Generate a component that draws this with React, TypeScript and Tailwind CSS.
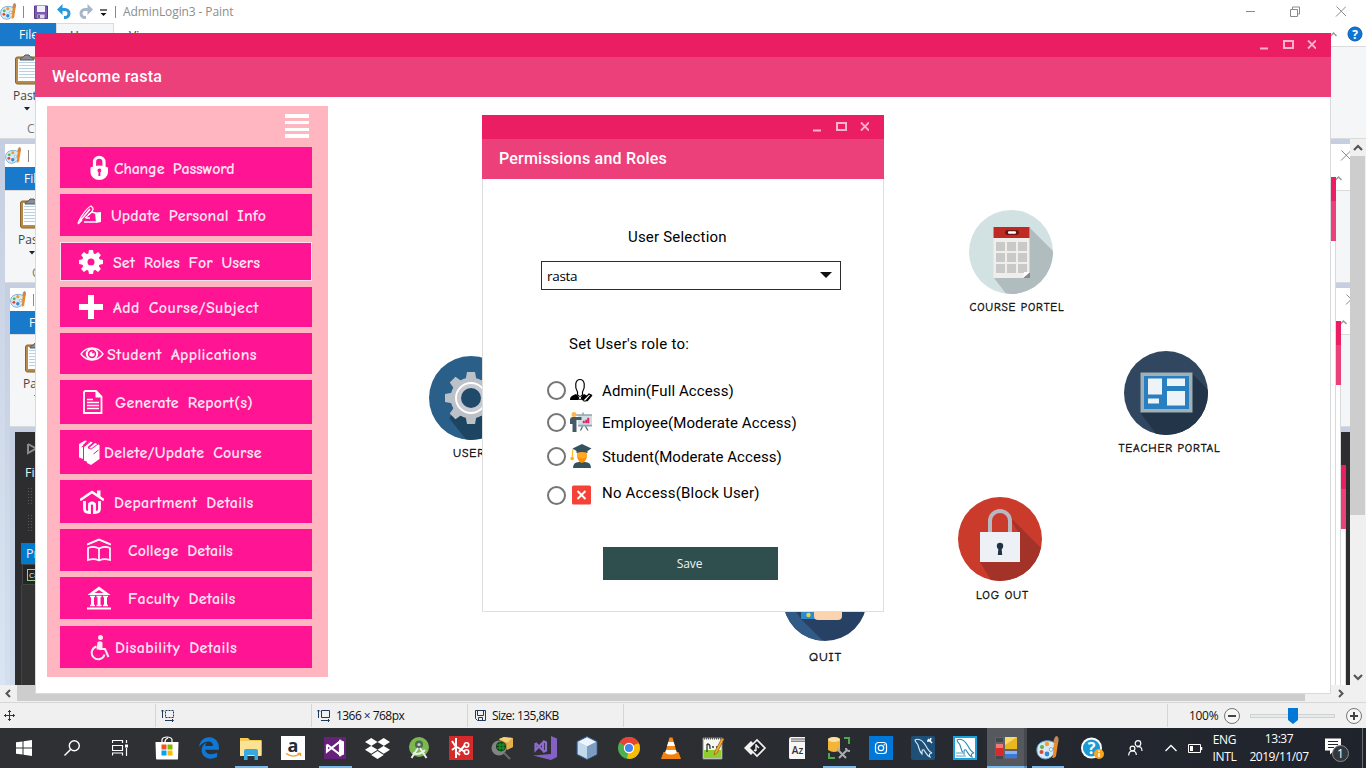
import React from "react";
import { FaDropbox, FaEdgeLegacy } from "react-icons/fa";

const ui = "font-['Open_Sans','Noto_Sans',sans-serif]";
const comic = "font-['Comic_Sans_MS','Comic_Neue','Noto_Sans',sans-serif]";

type SvgProps = { w: number; h: number; vb?: string; className?: string; children: React.ReactNode };
function Svg({ w, h, vb, className, children }: SvgProps) {
  return (
    <svg width={w} height={h} viewBox={vb ?? `0 0 ${w} ${h}`} className={`block shrink-0 ${className ?? ""}`} fill="none">
      {children}
    </svg>
  );
}

function Palette({ size }: { size: number }) {
  return (
    <Svg w={size} h={size} vb="0 0 24 24">
      <path d="M1 12c1-6 8-8 13-7 5 1 6 3 5 5s-2 2-1 4-1 8-8 9C4 23 0 19 1 12Z" fill="#d5e9f6" stroke="#5b9ac4" strokeWidth="1" />
      <circle cx="11" cy="8" r="2.200" fill="#f0a030" />
      <circle cx="6" cy="11" r="2" fill="#5fb445" />
      <circle cx="5.500" cy="16" r="2" fill="#e0452f" />
      <circle cx="11" cy="18" r="2.400" fill="#3a86c8" />
      <circle cx="15" cy="13.500" r="1.800" fill="#fff" stroke="#5b9ac4" strokeWidth="0.800" />
      <path d="M20 0c3 0 3 5 2 7h-4c-1-2 0-5 2-7Z" fill="#c48a55" />
      <path d="M18 7h4l-2 13c-1 2-3 2-4 2 2-3 1-9 2-15Z" fill="#ee8a25" />
    </Svg>
  );
}

function Clipboard() {
  return (
    <Svg w={24} h={32}>
      <rect x="1.500" y="3" width="26" height="27" rx="2" fill="#b98a45" stroke="#8a6430" />
      <rect x="4" y="5" width="20" height="22" fill="#fbfdff" />
      {[8, 11, 14, 17, 20, 23].map((y) => (
        <path key={y} d={`M5 ${y}.5h19`} stroke="#b9d0e0" />
      ))}
      <path d="M6 6c0-3 4-2 5-5h4c1 3 5 2 5 5Z" fill="#8a8d92" stroke="#55585d" />
    </Svg>
  );
}

function Gear({ size, color, hole, r = 8 }: { size: number; color: string; hole: string; r?: number }) {
  return (
    <Svg w={size} h={size} vb="-12 -12 24 24">
      {[0, 45, 90, 135, 180, 225, 270, 315].map((a) => (
        <path key={a} d="M-2.900 -7L-2 -12H2L2.900 -7Z" fill={color} transform={`rotate(${a})`} />
      ))}
      <circle r="9" fill={color} />
      <circle r={12 - r} fill={hole} />
    </Svg>
  );
}

function CaptionButtons() {
  return (
    <Svg w={58} h={12} className="mr-[15px]">
      <g stroke="#f9b4cb" strokeWidth="2">
        <path d="M2 9.500h8" />
        <rect x="26" y="2" width="9" height="7" />
        <path d="M50 1.500l8 8M58 1.500l-8 8" strokeWidth="1.800" />
      </g>
    </Svg>
  );
}

function TitleBars({ title, tracking }: { title: string; tracking: string }) {
  return (
    <>
      <div className="flex h-6 shrink-0 items-center justify-end bg-[#eb1d63]"><CaptionButtons /></div>
      <div className={`flex h-10 shrink-0 items-center bg-[#ec407a] pb-px pl-[17px] font-['Roboto',sans-serif] text-[16px] font-medium text-white ${tracking}`}>
        {title}
      </div>
    </>
  );
}

const items: { label: string; box: string; pad: string; text: string; icon: React.ReactNode }[] = [
  { label: "Change Password", box: "h-[41px]", pad: "pl-[30px]", text: "ml-1 tracking-[-0.2px]", icon: (
    <Svg w={20} h={26}><path d="M4.500 13V7a4.700 4.700 0 0 1 9.500 0v6" stroke="#fff" strokeWidth="3.200" /><path d="M.5 12.500q9-4 17.500 0v5a8.700 7.500 0 0 1-17.500 0Z" fill="#fff" /><path d="M9.300 13.500a2 2 0 0 1 1.100 3.700v3.800h-2v-3.800a2 2 0 0 1 .9-3.700Z" fill="#ff1493" /></Svg>) },
  { label: "Update Personal Info", box: "mt-[6px] h-[42px]", pad: "pl-[17px]", text: "ml-[9px] tracking-[0.12px]", icon: (
    <Svg w={25} h={20}><path d="M1 18l3-6C8 6 11 2 14 1l2 2c1 3-4 7-8 10" stroke="#fff" strokeWidth="1.300" /><path d="M3 16L13 4M1 19l4-4" stroke="#fff" strokeWidth="1.500" /><path d="M11 10l4-3 3 1h1M9 13h4M7 17h12" stroke="#fff" strokeWidth="1.400" /><path d="M18 7.500l6-.5v10l-5 1Z" fill="#fff" /></Svg>) },
  { label: "Set Roles For Users", box: "mt-[6px] h-[39px] border border-[#f3e6ee]", pad: "pl-[18px]", text: "ml-[10px] tracking-[0.03px]", icon: <Gear size={24} color="#fff" hole="#ff1493" r={8.5} /> },
  { label: "Add Course/Subject", box: "mt-[6px] h-[40px]", pad: "pl-[19px]", text: "ml-[10px] tracking-[0.4px]", icon: (
    <Svg w={24} h={24}><path d="M9 0h6v9h9v6h-9v9H9v-9H0V9h9Z" fill="#fff" /></Svg>) },
  { label: "Student Applications", box: "mt-[6px] h-[41px]", pad: "pl-[20px]", text: "ml-[3px] tracking-[0.35px]", icon: (
    <Svg w={24} h={18}><path d="M1 9C7 .8 17 .8 23 9 17 17 7 17 1 9Z" stroke="#fff" strokeWidth="1.300" /><circle cx="12" cy="9" r="5.200" stroke="#fff" strokeWidth="2" /><circle cx="12" cy="9" r="2.600" fill="#fff" /><circle cx="13" cy="7.500" r="1" fill="#ff1493" /></Svg>) },
  { label: "Generate Report(s)", box: "mt-[6px] h-[44px]", pad: "pl-[23px]", text: "ml-[12px] tracking-[0.17px]", icon: (
    <Svg w={20} h={24}><path d="M2 1h11l5.500 5.500V23H1V2Z" stroke="#fff" strokeWidth="1.800" /><path d="M12.500 1v6.500H19L12.500 1Z" fill="#fff" /><path d="M4 9.500h6M4 12.500h12M4 15.500h12M4 18.500h12" stroke="#fff" strokeWidth="1.400" /></Svg>) },
  { label: "Delete/Update Course", box: "mt-[6px] h-[44px]", pad: "pl-[19px]", text: "ml-[4px] tracking-[0.22px]", icon: (
    <Svg w={21} h={25}><path d="M0 4L6 .500l2 .5-4 4v14L0 17.500Z" fill="#fff" /><path d="M4.800 6.500l6-5 3 1-5 4.500v15l-4-1.500Z" fill="#fff" /><path d="M9.500 8.500L16 3l4.500 2v14L12 25l-4-2V8Z" fill="#fff" /><path d="M9 7.500l3 1.700L19 4M4.500 7l7-5.500M4.500 7v13M14.500 14l5-4M9 3L2.500 7" stroke="#ff1493" strokeWidth="1" /></Svg>) },
  { label: "Department Details", box: "mt-[6px] h-[43px]", pad: "pl-[20px]", text: "ml-[10px] tracking-[0.28px]", icon: (
    <Svg w={24} h={24}><path d="M1 9.500L12 2l11 7.500" stroke="#fff" strokeWidth="2.600" strokeLinecap="round" /><path d="M17 .5h3.500v7L17 5Z" fill="#fff" /><path d="M4.500 11v8q0 3.500 5 3.500V14q2.500-2 5 0v8.500q5 0 5-3.500v-8" stroke="#fff" strokeWidth="2.800" /></Svg>) },
  { label: "College Details", box: "mt-[6px] h-[42px]", pad: "pl-[27px]", text: "ml-[17px] tracking-[0.07px]", icon: (
    <Svg w={24} h={24}><path d="M0 6.500L12 1.500l12 5" stroke="#fff" strokeWidth="2" /><path d="M1 10q6-2.500 11 .5 5-3 11-.5v12q-6-2-11 .5-5-2.500-11-.5ZM12 10.500v12" stroke="#fff" strokeWidth="1.700" /></Svg>) },
  { label: "Faculty Details", box: "mt-[6px] h-[42px]", pad: "pl-[27px]", text: "ml-[17px] tracking-[0.27px]", icon: (
    <Svg w={24} h={24}><path d="M12 .5l11.500 8.500H.5ZM12 4L7.500 7h9Z" fill="#fff" fillRule="evenodd" /><path d="M3 10.500h5M9.500 10.500h5M16 10.500h5M3 19.500h5M9.500 19.500h5M16 19.500h5" stroke="#fff" strokeWidth="1.500" /><path d="M5.500 10v10M12 10v10M18.500 10v10" stroke="#fff" strokeWidth="3" /><path d="M0 21.500h24v2H0Z" fill="#fff" /></Svg>) },
  { label: "Disability Details", box: "mt-[7px] h-[42px]", pad: "pl-[29px]", text: "ml-[5px] tracking-[0.38px]", icon: (
    <Svg w={21} h={27}><circle cx="11.500" cy="3.500" r="2.500" fill="#f4ecf0" /><path d="M8.500 8q3-1.500 5 .5v7h-6Z" fill="#f4ecf0" /><path d="M10 15h6l3.500 8M7.500 12.500a6.500 6.500 0 1 0 8 8" stroke="#f4ecf0" strokeWidth="2" /></Svg>) },
];

function Sidebar() {
  return (
    <nav className="mt-[9px] ml-[11px] flex h-[571px] w-[281px] shrink-0 flex-col bg-[#ffb6c1] px-[13px]">
      <div className="mt-2 mr-[6px] ml-auto flex h-6 w-6 flex-col justify-between">
        <i className="h-[3.5px] bg-white" /><i className="h-[3.5px] bg-white" /><i className="h-[3.5px] bg-white" /><i className="h-[3.5px] bg-white" />
      </div>
      <div className="mt-[9px] flex w-[252px] flex-col">
        {items.map((it) => (
          <button key={it.label} className={`flex shrink-0 items-center bg-[#ff1493] text-left text-[16px] font-bold whitespace-nowrap text-[#fbe4f0] ${comic} ${it.box} ${it.pad}`}>
            {it.icon}
            <span className={`pt-[2px] leading-5 [word-spacing:3px] ${it.text}`}>{it.label}</span>
          </button>
        ))}
      </div>
    </nav>
  );
}

type TileProps = { pos: string; label: string; x: number; y: number; len: number; bg: string; id: string; children: React.ReactNode };
function Tile({ pos, label, x, y, len, bg, id, children }: TileProps) {
  return (
    <div className={`absolute h-[110px] w-[120px] ${pos}`}>
      <Svg w={120} h={110}>
        <defs><clipPath id={id}><circle cx="60" cy="44" r="42" /></clipPath></defs>
        <circle cx="60" cy="44" r="42" fill={bg} />
        <g clipPath={`url(#${id})`}>{children}</g>
        <text x={x} y={y} textLength={len} lengthAdjust="spacingAndGlyphs" fontSize="11" letterSpacing="0.8" fill="#111" stroke="#111" strokeWidth="0.350" fontFamily="'Comic Sans MS','Comic Neue','Noto Sans',sans-serif">{label}</text>
      </Svg>
    </div>
  );
}

function Tiles() {
  return (
    <>
      <Tile pos="top-[320.5px] left-[376px]" label="USER" x={42} y={102.5} len={32} bg="#2a5f8a" id="t-user">
        <path d="M38 64L82 22l60 60-50 50Z" fill="#1d4562" />
        {[0, 45, 90, 135, 180, 225, 270, 315].map((a) => (
          <path key={a} d="M-5.500 -18L-4 -26H4L5.500 -18Z" fill="#bcc0c7" transform={`translate(60 44) rotate(${a})`} />
        ))}
        <circle cx="60" cy="44" r="20.500" fill="#bcc0c7" />
        <circle cx="60" cy="44" r="15" fill="#c7cad0" stroke="#fff" strokeWidth="2" />
        <circle cx="60" cy="44" r="10" fill="#1f4a69" />
      </Tile>
      <Tile pos="top-[175px] left-[915.5px]" label="COURSE PORTEL" x={18.5} y={102.5} len={95} bg="#d2e2e3" id="t-course">
        <path d="M78 19l60 60-50 50-45-59Z" fill="#b0bcbd" />
        <rect x="42.500" y="20" width="36" height="50" fill="#f0eeea" />
        <rect x="42.500" y="19" width="36" height="11" fill="#c02a22" />
        <rect x="54" y="22" width="14" height="5" rx="2.500" fill="#6d1714" /><rect x="57" y="23.200" width="8" height="2.600" rx="1" fill="#fff" />
        {[34, 45, 56].map((cy) => [45, 56, 67].map((cx) => <rect key={`${cx}-${cy}`} x={cx} y={cy} width="9" height="9" fill="#c8c9c8" />))}
        <path d="M72 70l7-6v6Z" fill="#85888b" /><path d="M72 70l1-6h6Z" fill="#fff" />
      </Tile>
      <Tile pos="top-[315.5px] left-[1071px]" label="TEACHER PORTAL" x={12.5} y={102.5} len={102} bg="#31475f" id="t-teacher">
        <path d="M85 23.500l60 60-60 50-50-69Z" fill="#233548" />
        <rect x="34.500" y="23.500" width="52" height="40" fill="#9fb0b6" />
        <rect x="38" y="27" width="45" height="33" fill="#2a7fc0" />
        <g fill="#eef3f8"><rect x="42" y="29.500" width="14" height="16" /><rect x="61" y="29.500" width="18" height="7.500" /><rect x="42" y="49.500" width="11" height="5" /><rect x="61" y="42" width="18" height="14.500" /></g>
      </Tile>
      <Tile pos="top-[462px] left-[905px]" label="LOG OUT" x={36} y={104} len={53} bg="#cb3b2c" id="t-logout">
        <path d="M68 20l60 60-50 50-38-63L80 40Z" fill="#a33228" />
        <path d="M50 38V26a10 10 0 0 1 20 0v12" stroke="#b7b8c1" strokeWidth="4" />
        <rect x="40" y="37" width="40" height="30" fill="#edf1f6" />
        <circle cx="60" cy="51" r="3.200" fill="#1f3345" /><path d="M58.500 52h3l.7 8h-4.400Z" fill="#1f3345" />
      </Tile>
      <Tile pos="top-[521.5px] left-[730px]" label="QUIT" x={44} y={105.5} len={33} bg="#264163" id="t-quit">
        <path d="M0 0h120v40H0ZM36 64l24 24-40 10V40Z" fill="#315a87" />
        <rect x="36" y="50" width="14" height="14" fill="#2a8bd0" /><circle cx="43.500" cy="60" r="2.200" fill="#f5cf3a" />
        <rect x="49" y="46" width="28" height="19" rx="4" fill="#fbd3ae" />
      </Tile>
    </>
  );
}

function Radio() {
  return <span className="block h-[19px] w-[19px] shrink-0 rounded-full border-2 border-[#757575] bg-white" />;
}

const roles: { label: string; row: string; text: string; icon: React.ReactNode }[] = [
  { label: "Admin(Full Access)", row: "h-8", text: "tracking-[0.1px]", icon: (
    <Svg w={24} h={24}><path d="M7.500 14C4.500 9 5 1.500 10 1.500S15.500 9 12.500 14v3L10 19l-2.500-2Z" stroke="#000" strokeWidth="1.200" /><path d="M0 22c0-4 3-4.500 6-6l4 4 4-4 3 1.500-4 4.500Z" fill="#000" /><path d="M9 18.500l2 3M11 18.500l-2 3" stroke="#fff" /><path d="M13 22l6-6 2 1-5 6h-2ZM17 23l5-6" stroke="#000" strokeWidth="1.200" /></Svg>) },
  { label: "Employee(Moderate Access)", row: "h-8", text: "tracking-[0.11px]", icon: (
    <Svg w={24} h={24}><rect x="8" y="5" width="14" height="12" fill="#cfdde4" /><path d="M6 5h16M13 2.500v2M8 15.500h14" stroke="#90a4ae" strokeWidth="1.500" /><path d="M12.500 16.500l-2 4M15.500 16.500l2.500 4" stroke="#546e7a" strokeWidth="1.300" /><path d="M13 13v-2h1.500v2ZM15.500 13v-3H17v3ZM17.500 13V8H19v5Z" fill="#e0245e" stroke="#e0245e" strokeWidth="0.500" /><circle cx="4" cy="4.500" r="2.500" fill="#ffb74d" /><path d="M0 10q0-3 3-3h8.500v3H6.500v12H2.500v-8H0Z" fill="#455a64" /></Svg>) },
  { label: "Student(Moderate Access)", row: "h-9", text: "tracking-[0.05px]", icon: (
    <Svg w={24} h={24}><path d="M3 24q0-6 6-6h6q6 0 6 6Z" fill="#37525f" /><rect x="7" y="6" width="10" height="10" rx="4" fill="#ffa726" /><path d="M7.500 13q5 3 9 0-.5 5-4.500 6-4-1-4.500-6Z" fill="#ff8f00" /><path d="M12 0l9.500 4.500-4 2.500v2q-5.500-2-11 0V7l-4-2.500Z" fill="#37525f" /><path d="M3 5L2 14" stroke="#ffb300" /><circle cx="2.200" cy="14.500" r="1.800" fill="#ffb300" /></Svg>) },
  { label: "No Access(Block User)", row: "h-[42px]", text: "tracking-[0.2px] pb-[5px]", icon: (
    <Svg w={24} h={24}><rect x="2" y="2.500" width="19" height="19" rx="1.500" fill="#f44336" /><path d="M7.500 8l8 8M15.500 8l-8 8" stroke="#fff" strokeWidth="2" /></Svg>) },
];

function Dialog() {
  return (
    <section className="absolute top-[82px] left-[447px] flex h-[497px] w-[402px] flex-col bg-white font-['Roboto',sans-serif] text-[15px] text-black">
      <TitleBars title="Permissions and Roles" tracking="tracking-[0.21px]" />
      <div className="flex flex-1 flex-col border border-t-0 border-[#dedede]">
        <div className="mt-[48px] ml-[145px] h-5 leading-5 tracking-[0.2px]">User Selection</div>
        <div className={`mt-[14px] ml-[58px] flex h-[29px] w-[300px] items-center justify-between border border-[#2c2c2c] pt-px pr-2 pl-[5px] text-[13.5px] tracking-[-0.3px] ${ui}`}>
          <span>rasta</span>
          <Svg w={12} h={6} className="mb-[2px]"><path d="M0 0h12L6 6Z" fill="#111" /></Svg>
        </div>
        <div className="mt-[44px] ml-[86px] h-5 leading-5 tracking-[0.25px]">Set User's role to:</div>
        <div className="mt-[20px] ml-[64px] flex flex-col">
          {roles.map((r) => (
            <label key={r.label} className={`flex items-center ${r.row}`}>
              <Radio />
              <span className="ml-[4px]">{r.icon}</span>
              <span className={`ml-[8px] pt-[1px] leading-5 whitespace-nowrap ${r.text}`}>{r.label}</span>
            </label>
          ))}
        </div>
        <button className={`mt-[31px] ml-[120px] h-[33px] w-[175px] bg-[#2f4f4f] pr-[2px] text-[12px] tracking-[-0.1px] text-[#eef2f2] ${ui}`}>Save</button>
      </div>
    </section>
  );
}

function AppWindow({ full }: { full: boolean }) {
  return (
    <main className="absolute top-[33px] left-[35px] flex h-[661px] w-[1296px] flex-col bg-white">
      <TitleBars title="Welcome rasta" tracking="tracking-[0.28px]" />
      <div className="flex flex-1 border border-t-0 border-[#d9dadb]">{full && <Sidebar />}</div>
      {full && <Tiles />}
      {full && <Dialog />}
    </main>
  );
}

function PaintShell({ level }: { level: number }) {
  return (
    <div className={`flex h-[702px] w-[1366px] flex-col bg-white text-[12px] ${ui}`}>
      <div className="flex h-[23px] shrink-0 items-center">
        <Palette size={17} />
        <i className="ml-[6px] h-3 w-px bg-[#8a8a8a]" />
        <Svg w={16} h={16} className="ml-[9px]"><path d="M1.500 2h13v12.500h-13Z" fill="#7d5ab0" stroke="#55388a" /><path d="M4 2h8v6H4Z" fill="#eef0fa" /><path d="M4.500 10.500h7v4h-7Z" fill="#d8dbe8" /><path d="M6 11v3" stroke="#444" strokeWidth="1.500" /></Svg>
        <Svg w={14} h={16} className="ml-[8px]"><path d="M4.500 5.500H8a3.800 3.800 0 0 1 0 8H7" stroke="#2a98dc" strokeWidth="3" /><path d="M0 5.500L5.500 0v11Z" fill="#2a98dc" /></Svg>
        <Svg w={14} h={16} className="ml-[8px]"><path d="M9.500 5.500H6a3.800 3.800 0 0 0 0 8h1" stroke="#a9b5c9" strokeWidth="3" /><path d="M14 5.500L8.500 0v11Z" fill="#a9b5c9" /></Svg>
        <Svg w={8} h={8} className="mt-[3px] ml-[7px]"><path d="M0 1h7" stroke="#111" strokeWidth="1.200" /><path d="M.5 4h6l-3 3Z" fill="#111" /></Svg>
        <i className="ml-[7px] h-3 w-px bg-[#8a8a8a]" />
        <span className="ml-[7px] tracking-[-0.1px] text-[#8d8d8d]">AdminLogin3 - Paint</span>
        <Svg w={100} h={14} className="mr-[20px] ml-auto"><g stroke="#8a8a8a" strokeWidth="1"><path d="M-1 6.500h10M44.500 4.500h7v7h-7ZM46.500 4v-2h7v7h-2" /><path d="M90.500 1.500l10 10M100 1.500l-10 10" /></g></Svg>
      </div>
      <div className="flex h-[23px] shrink-0 text-[#333]">
        <div className="flex h-full w-14 items-center bg-[#1979ca] pt-px pl-[19px] text-white">File</div>
        <div className="w-[58px] border border-b-0 border-[#dadbdc] bg-[#f5f6f7] pl-[13px] leading-[24px]">Home</div>
        <div className="pl-[15px] leading-[26px]">View</div>
        <Svg w={37} h={23} className="ml-auto"><path d="M1.500 13l3-3 3 3" stroke="#9a9a9a" strokeWidth="1.500" /><circle cx="26" cy="11" r="7" fill="#0f75d4" stroke="#0b5cae" /><text x="26" y="15.500" fontSize="12" fontWeight="700" fill="#fff" textAnchor="middle" fontFamily="Open Sans, sans-serif">?</text></Svg>
      </div>
      <div className="flex h-[93px] shrink-0 flex-col border-y border-[#dadbdc] bg-[#f5f6f7] text-[#444]">
        <div className="mt-[7px] ml-[14px]"><Clipboard /></div>
        <span className="mt-[2px] ml-[13px] leading-4">Paste</span>
        <Svg w={6} h={4} className="mt-[3px] ml-[24px]"><path d="M0 0h6L3 3.500Z" fill="#222" /></Svg>
        <span className="mt-[10px] ml-[27px] leading-4 text-[#777]">Clipboard</span>
      </div>
      <div className="flex flex-1">
        <div className="relative h-[546px] w-[1350px] overflow-hidden bg-linear-to-b from-[#c5cfe1] to-[#dae5f3]">
          <div className="absolute top-[5px] left-[5px]">
            {level < 2 ? <Screen level={level + 1} /> : <StudioShell />}
          </div>
        </div>
        <div className="flex flex-1 flex-col items-center bg-[#f0f0f0]">
          <Svg w={16} h={17}><path d="M4 11l4-4 4 4" stroke="#555" strokeWidth="2.200" /></Svg>
          <div className="mr-px h-[359px] w-[15px] bg-[#cdcdcd]" />
          <div className="flex-1" />
          <Svg w={16} h={17}><path d="M4 7l4 4 4-4" stroke="#555" strokeWidth="2.200" /></Svg>
        </div>
      </div>
      <div className="flex h-[17px] shrink-0 items-center bg-[#f0f0f0]">
        <Svg w={17} h={17}><path d="M10 5L6.500 8.500l3.500 3.500" stroke="#555" strokeWidth="2" /></Svg>
        <div className="mb-px h-[16px] w-[1288px] bg-[#cdcdcd]" />
        <Svg w={17} h={17} className="ml-[27px]"><path d="M7 5l3.500 3.500L7 12" stroke="#555" strokeWidth="2" /></Svg>
      </div>
    </div>
  );
}

function StudioShell() {
  return (
    <div className={`relative h-[702px] w-[1366px] overflow-hidden bg-[#2d2d30] text-[12.5px] text-[#f0f0f0] ${ui}`}>
      <div className="flex flex-col">
        <Svg w={22} h={14} className="mt-[10px] ml-3"><path d="M1 2v9l8-4.500L1 2M10 4v6" stroke="#8b8b8e" strokeWidth="2" /></Svg>
        <span className="mt-[7px] ml-[10px] leading-5">File</span>
        <div className="mt-[4px] ml-3 h-[18px] w-[6px] bg-[radial-gradient(#58585c_0.7px,transparent_0.8px)] bg-size-[3px_3px]" />
        <div className="mt-[9px] ml-3 h-[18px] w-[6px] bg-[radial-gradient(#58585c_0.7px,transparent_0.8px)] bg-size-[3px_3px]" />
        <div className="mt-[11px] ml-[6px] h-[21px] w-40 bg-[#007acc] pl-[5px] leading-[21px]">Program.cs</div>
        <div className="ml-[7px] flex h-[21px] w-40 items-center border border-[#434346] bg-[#252526] pl-[4px]">
          <span className="h-3 border border-[#8fd58f] px-[1px] text-[8px] leading-[10px]">C#</span>
        </div>
        <div className="ml-[6px] h-[300px] w-40 border-l border-[#434346] bg-[#333334]" />
      </div>
      <AppWindow full={false} />
    </div>
  );
}

function Screen({ level }: { level: number }) {
  return (
    <div className="relative h-[702px] w-[1366px]">
      <PaintShell level={level} />
      <AppWindow full={level === 0} />
    </div>
  );
}

function StatusBar() {
  return (
    <div className={`flex h-[26px] items-center border-t border-[#d7d7d7] bg-[#f0f0f0] text-[12px] tracking-[-0.55px] text-[#111] ${ui}`}>
      <div className="flex h-[23px] w-[156px] items-center border-r border-[#d5d5d5] pl-1"><Svg w={11} h={11}><path d="M5.500 0v11M0 5.500h11M4 2l1.500-1.500L7 2M4 9l1.500 1.500L7 9M2 4L.5 5.500 2 7M9 4l1.500 1.500L9 7" stroke="#1e395b" /></Svg></div>
      <div className="flex h-[23px] w-[156px] items-center border-r border-[#d5d5d5] pl-[5px]"><Svg w={13} h={13}><path d="M1.500 9V1M0 2.500L1.500 1 3 2.500M4 11.500h8M11 10l1.500 1.500L11 13" stroke="#1e395b" /><path d="M4.500 1.500h8v7h-8Z" stroke="#1e395b" strokeDasharray="2 1" /></Svg></div>
      <div className="flex h-[23px] w-[156px] items-center border-r border-[#d5d5d5] pl-[5px]"><Svg w={13} h={13}><path d="M1.500 9V1M0 2.500L1.500 1 3 2.500M4 11.500h8M11 10l1.500 1.500L11 13M4.500 1.500h8v7h-8Z" stroke="#1e395b" /></Svg><span className="ml-[6px]">1366 × 768px</span></div>
      <div className="flex h-[23px] w-[156px] items-center border-r border-[#d5d5d5] pl-[7px]"><Svg w={11} h={11}><path d="M.5.5h10v10H2.500l-2-2ZM2.500.5v5h6v-5M3.500 10.500v-3h4v3" stroke="#1e395b" /></Svg><span className="ml-[6px]">Size: 135,8KB</span></div>
      <div className="h-[23px] w-[544px] border-r border-[#d5d5d5]" />
      <span className="ml-[21px] w-[34px] tracking-[-0.3px]">100%</span>
      <Svg w={18} h={18}><circle cx="9" cy="9" r="7.500" fill="#f6f6f6" stroke="#777" /><path d="M5 9h8" stroke="#444" strokeWidth="2" /></Svg>
      <Svg w={86} h={18} className="ml-[9px]"><rect x=".5" y="7.500" width="84" height="3" fill="#e7eaea" stroke="#cfd2d2" /><path d="M38 1h10v12l-5 4-5-4Z" fill="#0078d7" /></Svg>
      <Svg w={18} h={18} className="ml-[9px]"><circle cx="9" cy="9" r="7.500" fill="#f6f6f6" stroke="#777" /><path d="M5 9h8M9 5v8" stroke="#444" strokeWidth="2" /></Svg>
    </div>
  );
}

const S = ({ children }: { children: React.ReactNode }) => <Svg w={24} h={24}>{children}</Svg>;

const Dolphin = ({ c }: { c: string }) => (
  <path d="M4 4c4-2 8 1 11 6 2 4 4 6 6 7-3 0-3 2-2 4-3-1-4-4-6-7-2-1-2 1-2 4-3-3-3-6-4-9-1-2-3-3-3-5Z" stroke={c} strokeWidth="1.100" />
);

const apps: { name: string; on?: boolean; icon: React.ReactNode }[] = [
  { name: "Store", icon: <S><path d="M7 6V3.500Q8 1 12 1t5 2.500V6M10 6q0-3 3-4" stroke="#fff" strokeWidth="1.200" /><path d="M.5 6h23l-.5 17q0 .5-1 .5H2q-1 0-1-1Z" fill="#fff" /><path d="M6.500 8.500h5v5h-5Z" fill="#f25022" /><path d="M12.500 8.500h5v5h-5Z" fill="#7fba00" /><path d="M6.500 14.500h5v5h-5Z" fill="#00a4ef" /><path d="M12.500 14.500h5v5h-5Z" fill="#ffb900" /></S> },
  { name: "Edge", icon: <FaEdgeLegacy size={22} color="#0f78d4" /> },
  { name: "Explorer", on: true, icon: <S><path d="M1 2h8l2 2h11.500v15H1Z" fill="#f3cb55" /><path d="M1 5h21.500v15H1Z" fill="#fde293" /><path d="M5 24v-9q0-2 2-2h10q2 0 2 2v9h-3.500v-5h-7v5Z" fill="#38a9e0" /></S> },
  { name: "Amazon", icon: <S><rect width="24" height="24" fill="#fff" /><text x="12" y="15.500" fontSize="18" fontWeight="700" textAnchor="middle" fill="#222d3a" fontFamily="Open Sans, sans-serif">a</text><path d="M5 17.500q7 5 13.500.5M16.500 17.500h3v2.500" stroke="#f59b1c" strokeWidth="1.400" /></S> },
  { name: "Visual Studio 2012", on: true, icon: <S><rect x="1" y="1" width="22" height="22" fill="#68217a" /><path d="M4 8.500v7L17 5.500v13L4 8.500" stroke="#fff" strokeWidth="2.200" /><path d="M16 3.500l5 2v13l-5 2Z" fill="#fff" /></S> },
  { name: "Dropbox", icon: <FaDropbox size={25} color="#fff" /> },
  { name: "Android Studio", icon: <S><circle cx="12" cy="11" r="10" fill="#7cb750" /><circle cx="12" cy="8.500" r="4" fill="#4d6a52" /><circle cx="12" cy="8.500" r="1.600" fill="#c9d6cc" /><path d="M11 12L4.500 22M13 12l6.500 10M6 17q6 3 12-3" stroke="#e9eeea" strokeWidth="2" /></S> },
  { name: "Git client", icon: <S><rect width="24" height="24" fill="#d42a2c" /><path d="M7 2v20M3 5l4 6M3 14l4-3M7 16l4 3M10 16l6-7M8 11l8 5" stroke="#fff" strokeWidth="2" /><circle cx="17.500" cy="9" r="2.200" stroke="#fff" strokeWidth="1.600" /><circle cx="17.500" cy="16" r="2.200" stroke="#fff" strokeWidth="1.600" /></S> },
  { name: "Package search", icon: <S><path d="M8 3l5-2 9 1v9l-8 3Z" fill="#c88f32" /><path d="M8 3l5-2 9 1-6 5Z" fill="#f4d27c" /><path d="M16 7l6-5v9l-6 3Z" fill="#e2b04c" /><circle cx="8" cy="12" r="7.500" fill="#7f8582" /><circle cx="10" cy="10.500" r="5" fill="#103f18" /><path d="M6 9h8M6 12h8M9 6.500v8M12 6.500v8" stroke="#1fa32f" /><path d="M13 17l6 6" stroke="#666" strokeWidth="2.200" /></S> },
  { name: "Visual Studio", icon: <S><path d="M18 0l6 2.500v18.500L18 24 0 19.500 18 18Z" fill="#8661c5" /><path d="M2.500 7v7l7.500-7.500v8L2.500 7M10 5l3 1.500v8L10 16" stroke="#8e6bcf" strokeWidth="2.200" /></S> },
  { name: "NetBeans", icon: <S><path d="M12 .5l10 5v13l-10 5-10-5v-13Z" fill="#9db9d6" stroke="#31568a" strokeWidth="1" /><path d="M12 1.500l9 4.500-9 4.500L3 6Z" fill="#edf4fb" /><path d="M12 10.500v12l9-4.500V6Z" fill="#7c9cc4" /><path d="M3 6v12l9 4.500v-12Z" fill="#c3d9ec" /></S> },
  { name: "Chrome", icon: <S><circle cx="12" cy="12" r="11" fill="#4caf50" /><path d="M12 12L2.500 6.500a11 11 0 0 1 19 0Z" fill="#e94335" /><path d="M12 12l9.500-5.500A11 11 0 0 1 12 23l-2-1Z" fill="#fbbc05" /><path d="M12 6.500h10v1H12Z" fill="#e94335" /><circle cx="12" cy="12" r="5.200" fill="#fff" /><circle cx="12" cy="12" r="4" fill="#4285f4" /></S> },
  { name: "VLC", icon: <S><path d="M4.500 16h15l2.500 7H2Z" fill="#f08214" /><path d="M10.500 1.500h3L18 17.500q-6 3.500-12 0Z" fill="#f58a14" /><path d="M9.300 6h5.400l1.200 4H8.100ZM7 14h10l.8 3q-6 3-11.700 0Z" fill="#fff" /></S> },
  { name: "Notepad++", icon: <S><path d="M2 2h19v21H2Z" fill="#f4f8ef" stroke="#888" /><path d="M3 14h17v8H3Z" fill="#8fcf2d" /><path d="M3 2.500h17" stroke="#555" strokeWidth="2" strokeDasharray="1 1" /><path d="M6 8v8M6 8q3 0 3 3v2M11 11h2M15 11h2" stroke="#333" strokeWidth="1.300" /><path d="M21 2l-7 13-1 4 3-2L23 3Z" fill="#efb334" stroke="#a8571a" strokeWidth="0.800" /></S> },
  { name: "Diamonds", icon: <S><path d="M1 12l7-7 7 7-7 7Z" fill="#f2f2f2" /><path d="M6 12l8-8 8 8-8 8Z" fill="#202225" stroke="#f2f2f2" strokeWidth="1.600" /><path d="M13 8v7M13 9l3 3M13 15l-2-1" stroke="#f2f2f2" strokeWidth="1.400" /></S> },
  { name: "Dictionary", icon: <S><path d="M4 4q0-3 2-3h14v22H5q-1 0-1-2Z" fill="#f7f7f7" /><path d="M6 3h14M6 5.200h14" stroke="#555" /><text x="12.500" y="17.500" fontSize="10" fontWeight="600" textAnchor="middle" fill="#333" fontFamily="Open Sans, sans-serif">Az</text></S> },
  { name: "SQL tools", on: true, icon: <S><path d="M1 3q6-4 12 0v11q-6 4-12 0Z" fill="#f2b53a" /><ellipse cx="7" cy="3.500" rx="6" ry="2.500" fill="#fbe0a0" /><path d="M17 2h5v6M2 17v5h6" stroke="#4ea84b" strokeWidth="2" /><path d="M11 14l8 8M20 14l-8 8M10 13l3 1M19 12q0 3 4 3" stroke="#a9adb1" strokeWidth="2" /></S> },
  { name: "Instagram", icon: <S><rect width="24" height="24" fill="#0078d7" /><rect x="6.500" y="6.500" width="11" height="11" rx="3" stroke="#fff" strokeWidth="1.200" /><circle cx="12" cy="12" r="2.700" stroke="#fff" strokeWidth="1.200" /><circle cx="15.200" cy="8.800" r=".7" fill="#fff" /></S> },
  { name: "MySQL Workbench", icon: <S><rect width="24" height="24" rx="2" fill="#1d5079" /><Dolphin c="#dfe9f1" /><path d="M17 3l4 4M20 2l-1 3-3 0" stroke="#fff" strokeWidth="1.500" /></S> },
  { name: "MySQL Installer", icon: <S><rect x="1" y="1" width="22" height="22" fill="#fff" stroke="#19a3dd" strokeWidth="2" /><Dolphin c="#2d8bb5" /><path d="M3 17h8M3 20h10" stroke="#8ec6dd" strokeWidth="1.500" /></S> },
];

function Taskbar() {
  return (
    <div className={`flex h-10 bg-linear-to-r from-[#2e3033] from-40% to-[#1f232c] text-[12px] text-white ${ui}`}>
      <div className="flex w-12 items-center justify-center"><Svg w={16} h={16}><path d="M0 2.300L6.500 1.400V7.500H0ZM7.500 1.200L16 0v7.500H7.500ZM0 8.500h6.500v6.100L0 13.700ZM7.500 8.500H16V16l-8.500-1.200Z" fill="#fff" /></Svg></div>
      <div className="flex w-12 items-center justify-center"><Svg w={16} h={17}><circle cx="10.300" cy="5.700" r="5" stroke="#fff" strokeWidth="1.400" /><path d="M6.800 9.200L.5 15.500" stroke="#fff" strokeWidth="1.500" /></Svg></div>
      <div className="flex w-[50px] items-center justify-center pr-[2px]"><Svg w={17} h={16}><path d="M.5 3V.5h10V3M.5 5.500h10v5H.5ZM.5 15.500V13h10v2.500M14.500 0v3M14.500 8v8" stroke="#fff" strokeWidth="1.200" /><rect x="13" y="4.500" width="3" height="3" fill="#fff" /></Svg></div>
      {apps.map((a) => (
        <div key={a.name} className="flex w-[42px] shrink-0 flex-col items-center" title={a.name}>
          <div className="flex h-[38px] items-center pt-[2px]">{a.icon}</div>
          {a.on && <i className="h-[2px] w-[33px] bg-[#76b9ed]" />}
        </div>
      ))}
      <div className="ml-[1px] flex w-[37px] flex-col items-center bg-[#55585d]">
        <div className="flex h-[38px] items-center pt-[2px]"><S><rect x="1" y="1" width="22" height="22" fill="#606367" /><path d="M2 8h7v11H2Z" fill="#d8292d" /><path d="M2 8h7v4H2Z" fill="#ee7a74" /><path d="M2 2h7v4H2ZM2 20h7v3H2Z" fill="#44474b" /><path d="M11 1h12v12H11Z" fill="#eab720" /><path d="M11 1h12L11 9Z" fill="#f8da6a" /><path d="M11 15h12v7H11Z" fill="#3b78dd" /><path d="M11 15h12v3H11Z" fill="#85b3f2" /></S></div>
        <i className="h-[2px] w-full bg-[#76b9ed]" />
      </div>
      <div className="flex w-[3px] flex-col justify-end bg-[#45484d]"><i className="h-[2px] bg-[#5d93bd]" /></div>
      <div className="ml-[5px] flex w-[32px] flex-col items-center">
        <div className="flex h-[38px] items-center pt-[1px]"><Palette size={24} /></div>
        <i className="h-[2px] w-full bg-[#76b9ed]" />
      </div>
      <div className="ml-[16px] flex items-center"><S><circle cx="11.500" cy="12" r="10.500" fill="#fff" /><circle cx="11.500" cy="12" r="8.600" fill="#1b9ad6" /><text x="11.500" y="18" fontSize="16" fontWeight="700" textAnchor="middle" fill="#fff" fontFamily="Open Sans, sans-serif">?</text><circle cx="19" cy="18" r="5" fill="#f5a623" /><path d="M19 17v4M19 14.500v1.500" stroke="#fff" strokeWidth="1.500" /></S></div>
      <div className="ml-[24px] flex items-center"><Svg w={15} h={16}><circle cx="10" cy="3.500" r="2.800" stroke="#fff" strokeWidth="1.200" /><circle cx="4.500" cy="8.500" r="2.400" stroke="#fff" strokeWidth="1.200" /><path d="M.7 15.500q0-4.500 3.800-4.500t3.800 4M9 7q5-1.500 5 4" stroke="#fff" strokeWidth="1.200" /></Svg></div>
      <div className="ml-[21px] flex items-center"><Svg w={14} h={8}><path d="M1.500 7l5.500-5.500L12.500 7" stroke="#fff" strokeWidth="1.300" /></Svg></div>
      <div className="ml-[10px] flex items-center"><Svg w={15} h={9}><path d="M.5.500h12v8H.5Z" stroke="#fff" /><path d="M13.500 3v3" stroke="#fff" strokeWidth="1.500" /><path d="M2 2h3v5H2Z" fill="#fff" /></Svg></div>
      <div className="ml-[8px] flex w-[27px] flex-col items-center pt-[3px] leading-[17px] tracking-[-0.3px]"><span>ENG</span><span>INTL</span></div>
      <div className="ml-[10px] flex w-[62px] flex-col items-center pt-[2px] leading-[18px] tracking-[-0.45px]"><span>13:37</span><span>2019/11/07</span></div>
      <div className="ml-[15px] flex items-center pt-[4px]"><Svg w={26} h={26}><path d="M0 1.500h16v12H9l-4 4v-4H0Z" fill="#fff" /><path d="M3 4.500h10M3 7.500h10M3 10.500h6" stroke="#23262d" /><circle cx="15.500" cy="16.500" r="8" fill="#33363b" stroke="#8a8d90" /><text x="15.500" y="21" fontSize="12" textAnchor="middle" fill="#fff" fontFamily="Open Sans, sans-serif">1</text></Svg></div>
      <div className="ml-auto w-1 border-l border-[#6a6d72]" />
    </div>
  );
}

export default function App() {
  return (
    <div className="flex h-[768px] w-[1366px] flex-col overflow-hidden bg-white">
      <Screen level={0} />
      <StatusBar />
      <Taskbar />
    </div>
  );
}
